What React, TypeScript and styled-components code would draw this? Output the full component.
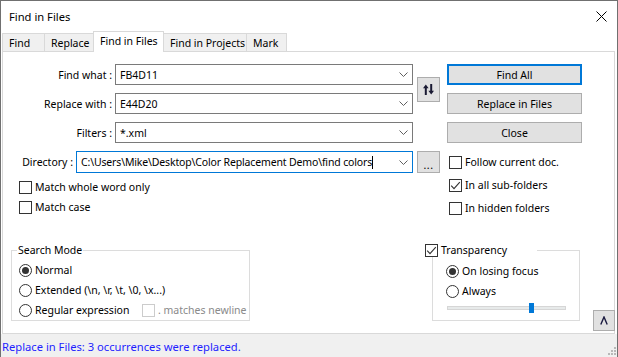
import React from "react";
import styled, { createGlobalStyle } from "styled-components";

const GlobalStyle = createGlobalStyle`
  html, body { margin: 0; padding: 0; background: #ffffff; }
  *, *::before, *::after { box-sizing: border-box; }
`;

const UI_FONT = `"Noto Sans", "Segoe UI", sans-serif`;

const Window = styled.div`
  width: 618px;
  height: 357px;
  display: flex;
  flex-direction: column;
  background: #ffffff;
  border: 1px solid #707070;
  border-bottom: 0;
  font-family: ${UI_FONT};
  font-size: 10.5px;
  color: #000;
  overflow: hidden;
`;

const TitleBar = styled.div`
  height: 30px;
  flex: none;
  display: flex;
  align-items: center;
  padding: 0 10px 0 8px;
`;

const Title = styled.div`
  flex: 1;
  font-size: 11.2px;
`;

const Body = styled.div`
  flex: 1;
  min-height: 0;
  display: flex;
  flex-direction: column;
  padding: 0 2px 0 1px;
`;

const TabStrip = styled.div`
  height: 20px;
  flex: none;
  display: flex;
  align-items: flex-end;
  position: relative;
  z-index: 1;
`;

const Tab = styled.div<{ $w: number; $active?: boolean }>`
  width: ${(p) => p.$w}px;
  height: ${(p) => (p.$active ? 21 : 18)}px;
  margin-bottom: ${(p) => (p.$active ? -1 : 0)}px;
  margin-left: -1px;
  display: flex;
  align-items: center;
  padding: 0 0 ${(p) => (p.$active ? 2 : 0)}px 6px;
  background: ${(p) => (p.$active ? "#ffffff" : "#f0f0f0")};
  border: 1px solid #d9d9d9;
  border-bottom: 0;
  white-space: nowrap;
  position: relative;
  z-index: ${(p) => (p.$active ? 2 : 1)};
  &:first-child { margin-left: 0; }
`;

const Panel = styled.div`
  flex: 1;
  min-height: 0;
  display: flex;
  flex-direction: column;
  border: 1px solid #d9d9d9;
  background: #ffffff;
`;

const TopGrid = styled.div`
  display: grid;
  grid-template-columns: 410px 27px 142px;
  grid-template-rows: 21px 21px 21px 22px auto;
  row-gap: 8px;
  padding-top: 12px;
`;

const FieldRow = styled.div<{ $row: number }>`
  grid-column: 1;
  grid-row: ${(p) => p.$row};
  display: flex;
  align-items: center;
  gap: 3px;
`;

const FieldLabel = styled.div<{ $w: number }>`
  width: ${(p) => p.$w}px;
  flex: none;
  text-align: right;
  white-space: nowrap;
`;

const Combo = styled.div<{ $focused?: boolean }>`
  flex: 1;
  height: 100%;
  display: flex;
  align-items: center;
  padding: 0 4px 0 4px;
  border: 1px solid ${(p) => (p.$focused ? "#0078d7" : "#7a7a7a")};
  background: #ffffff;
`;

const ComboText = styled.div<{ $tight?: boolean }>`
  flex: 1;
  display: flex;
  align-items: center;
  white-space: nowrap;
  overflow: hidden;
  letter-spacing: ${(p) => (p.$tight ? "-0.15px" : "0")};
`;

const Caret = styled.span`
  display: inline-block;
  width: 1px;
  height: 13px;
  background: #000;
`;

const Chevron = () => (
  <svg width="9" height="5" viewBox="0 0 9 5" style={{ flex: "none" }}>
    <polyline points="0.5,0.5 4.5,4.5 8.5,0.5" fill="none" stroke="#606060" strokeWidth="1" />
  </svg>
);

const SideButton = styled.div<{ $row: string }>`
  grid-column: 2;
  grid-row: ${(p) => p.$row};
  align-self: center;
  margin-left: 4px;
  width: 23px;
  height: ${(p) => (p.$row.includes("span") ? 25 : 22)}px;
  display: flex;
  align-items: center;
  justify-content: center;
  background: #e1e1e1;
  border: 1px solid #adadad;
`;

const Dots = styled.span`
  line-height: 1;
  padding-top: 6px;
  letter-spacing: 0.5px;
`;

const ActionButton = styled.div<{ $row: number; $default?: boolean }>`
  grid-column: 3;
  grid-row: ${(p) => p.$row};
  margin-left: 7px;
  width: 135px;
  height: 21px;
  display: flex;
  align-items: center;
  justify-content: center;
  background: #e1e1e1;
  border: ${(p) => (p.$default ? "2px solid #0078d7" : "1px solid #adadad")};
`;

const CheckList = styled.div<{ $col: number; $row: string; $gap: number; $top: number; $left: number }>`
  grid-column: ${(p) => p.$col};
  grid-row: ${(p) => p.$row};
  display: flex;
  flex-direction: column;
  gap: ${(p) => p.$gap}px;
  padding: ${(p) => p.$top}px 0 0 ${(p) => p.$left}px;
`;

const OptionRow = styled.div<{ $h?: number; $w?: number }>`
  height: ${(p) => p.$h ?? 13}px;
  ${(p) => (p.$w ? `width: ${p.$w}px;` : "")}
  flex: none;
  display: flex;
  align-items: center;
  gap: 3px;
  white-space: nowrap;
`;

const OptionText = styled.span<{ $disabled?: boolean }>`
  color: ${(p) => (p.$disabled ? "#8a8a8a" : "#000")};
  line-height: 13px;
`;

const CheckBoxBox = styled.span<{ $disabled?: boolean }>`
  width: 13px;
  height: 13px;
  flex: none;
  display: flex;
  align-items: center;
  justify-content: center;
  border: 1px solid ${(p) => (p.$disabled ? "#cccccc" : "#333333")};
  background: #ffffff;
`;

const RadioCircle = styled.span`
  width: 13px;
  height: 13px;
  flex: none;
  display: flex;
  align-items: center;
  justify-content: center;
  border: 1px solid #333333;
  border-radius: 50%;
  background: #ffffff;
`;

const RadioDot = styled.span`
  width: 7px;
  height: 7px;
  border-radius: 50%;
  background: #333333;
`;

const CheckBox = ({ checked, disabled }: { checked?: boolean; disabled?: boolean }) => (
  <CheckBoxBox $disabled={disabled}>
    {checked && (
      <svg width="11" height="11" viewBox="0 0 11 11">
        <polyline points="1.2,5.6 4,8.6 9.8,2.2" fill="none" stroke="#333" strokeWidth="1.1" />
      </svg>
    )}
  </CheckBoxBox>
);

const Radio = ({ checked }: { checked?: boolean }) => (
  <RadioCircle>{checked && <RadioDot />}</RadioCircle>
);

const BottomRow = styled.div`
  margin-top: auto;
  display: flex;
  align-items: flex-end;
  padding-left: 8px;
  margin-right: -1px;
`;

const GroupBox = styled.div<{ $w: number; $ml: number; $pt: number; $pl: number }>`
  position: relative;
  width: ${(p) => p.$w}px;
  height: 71px;
  margin-left: ${(p) => p.$ml}px;
  margin-bottom: 12px;
  border: 1px solid #dcdcdc;
  padding: ${(p) => p.$pt}px 0 0 ${(p) => p.$pl}px;
  display: flex;
  flex-direction: column;
`;

const GroupTitle = styled.div<{ $left: number; $w?: number }>`
  position: absolute;
  top: -8px;
  left: ${(p) => p.$left}px;
  ${(p) => (p.$w ? `width: ${p.$w}px;` : "")}
  height: 14px;
  padding: 0 1px;
  display: flex;
  align-items: center;
  gap: 3px;
  background: #ffffff;
  line-height: 14px;
  white-space: nowrap;
`;

const RadioRow = styled.div`
  height: 20px;
  flex: none;
  display: flex;
  align-items: center;
`;

const SliderRow = styled.div`
  height: 13px;
  width: 119px;
  margin-left: 1px;
  position: relative;
  display: flex;
  align-items: center;
`;

const SliderTrack = styled.div`
  width: 100%;
  height: 4px;
  background: #e7eaea;
  border: 1px solid #d6d6d6;
`;

const SliderThumb = styled.div`
  position: absolute;
  top: 2px;
  width: 5px;
  height: 10px;
  background: #0078d7;
`;

const CollapseButton = styled.div`
  width: 22px;
  height: 21px;
  margin-left: 13px;
  margin-bottom: 2px;
  display: flex;
  align-items: center;
  justify-content: center;
  background: #e1e1e1;
  border: 1px solid #adadad;
`;

const StatusBar = styled.div`
  height: 23px;
  flex: none;
  display: flex;
  align-items: center;
  padding: 0 1px;
  background: #f0f0f0;
`;

const StatusText = styled.div`
  flex: 1;
  color: #1e1eff;
  font-size: 11.2px;
  padding-top: 1px;
`;

const Grip = styled.svg`
  align-self: flex-end;
  margin-bottom: 2px;
`;

const tabs = [
  { label: "Find", w: 43 },
  { label: "Replace", w: 50 },
  { label: "Find in Files", w: 71, active: true },
  { label: "Find in Projects", w: 84 },
  { label: "Mark", w: 41 },
];

const SLIDER_VALUE = 0.69;

export default function App() {
  return (
    <>
      <GlobalStyle />
      <Window>
        <TitleBar>
          <Title>Find in Files</Title>
          <svg width="11" height="11" viewBox="0 0 11 11">
            <path d="M0.5 0.5 L10.5 10.5 M10.5 0.5 L0.5 10.5" stroke="#000" strokeWidth="1" />
          </svg>
        </TitleBar>
        <Body>
          <TabStrip>
            {tabs.map((t) => (
              <Tab key={t.label} $w={t.w} $active={t.active}>
                {t.label}
              </Tab>
            ))}
          </TabStrip>
          <Panel>
            <TopGrid>
              <FieldRow $row={1}>
                <FieldLabel $w={109}>Find what :</FieldLabel>
                <Combo>
                  <ComboText>FB4D11</ComboText>
                  <Chevron />
                </Combo>
              </FieldRow>
              <FieldRow $row={2}>
                <FieldLabel $w={109}>Replace with :</FieldLabel>
                <Combo>
                  <ComboText>E44D20</ComboText>
                  <Chevron />
                </Combo>
              </FieldRow>
              <FieldRow $row={3}>
                <FieldLabel $w={109}>Filters :</FieldLabel>
                <Combo>
                  <ComboText>*.xml</ComboText>
                  <Chevron />
                </Combo>
              </FieldRow>
              <FieldRow $row={4}>
                <FieldLabel $w={70}>Directory :</FieldLabel>
                <Combo $focused>
                  <ComboText $tight>
                    C:\Users\Mike\Desktop\Color Replacement Demo\find colors
                    <Caret />
                  </ComboText>
                  <Chevron />
                </Combo>
              </FieldRow>

              <SideButton $row="1 / span 2">
                <svg width="11" height="11" viewBox="0 0 11 11">
                  <path d="M2.8 11 V2.5" stroke="#1a1a33" strokeWidth="2" />
                  <path d="M0 4.2 L2.8 0.4 L5.6 4.2 Z" fill="#1a1a33" />
                  <path d="M8.2 0 V8.5" stroke="#1a1a33" strokeWidth="2" />
                  <path d="M5.4 6.8 L8.2 10.6 L11 6.8 Z" fill="#1a1a33" />
                </svg>
              </SideButton>
              <SideButton $row="4">
                <Dots>...</Dots>
              </SideButton>

              <ActionButton $row={1} $default>
                Find All
              </ActionButton>
              <ActionButton $row={2}>Replace in Files</ActionButton>
              <ActionButton $row={3}>Close</ActionButton>

              <CheckList $col={3} $row="4 / span 2" $gap={10} $top={5} $left={9}>
                <OptionRow>
                  <CheckBox />
                  <OptionText>Follow current doc.</OptionText>
                </OptionRow>
                <OptionRow>
                  <CheckBox checked />
                  <OptionText>In all sub-folders</OptionText>
                </OptionRow>
                <OptionRow>
                  <CheckBox />
                  <OptionText>In hidden folders</OptionText>
                </OptionRow>
              </CheckList>

              <CheckList $col={1} $row="5" $gap={7} $top={0} $left={16}>
                <OptionRow>
                  <CheckBox />
                  <OptionText>Match whole word only</OptionText>
                </OptionRow>
                <OptionRow>
                  <CheckBox />
                  <OptionText>Match case</OptionText>
                </OptionRow>
              </CheckList>
            </TopGrid>

            <BottomRow>
              <GroupBox $w={239} $ml={0} $pt={9} $pl={7}>
                <GroupTitle $left={5}>Search Mode</GroupTitle>
                <RadioRow>
                  <OptionRow $h={20}>
                    <Radio checked />
                    <OptionText>Normal</OptionText>
                  </OptionRow>
                </RadioRow>
                <RadioRow>
                  <OptionRow $h={20}>
                    <Radio />
                    <OptionText>Extended (\n, \r, \t, \0, \x...)</OptionText>
                  </OptionRow>
                </RadioRow>
                <RadioRow>
                  <OptionRow $h={20} $w={123}>
                    <Radio />
                    <OptionText>Regular expression</OptionText>
                  </OptionRow>
                  <OptionRow $h={20}>
                    <CheckBox disabled />
                    <OptionText $disabled>. matches newline</OptionText>
                  </OptionRow>
                </RadioRow>
              </GroupBox>

              <GroupBox $w={148} $ml={182} $pt={10} $pl={13}>
                <GroupTitle $left={-9} $w={113}>
                  <CheckBox checked />
                  <OptionText>Transparency</OptionText>
                </GroupTitle>
                <RadioRow>
                  <OptionRow $h={20}>
                    <Radio checked />
                    <OptionText>On losing focus</OptionText>
                  </OptionRow>
                </RadioRow>
                <RadioRow>
                  <OptionRow $h={20}>
                    <Radio />
                    <OptionText>Always</OptionText>
                  </OptionRow>
                </RadioRow>
                <SliderRow>
                  <SliderTrack />
                  <SliderThumb style={{ left: `${SLIDER_VALUE * 119}px` }} />
                </SliderRow>
              </GroupBox>

              <CollapseButton>
                <svg width="8" height="9" viewBox="0 0 8 9">
                  <polyline points="0.8,8.5 4,1 7.2,8.5" fill="none" stroke="#1a1a40" strokeWidth="1.4" />
                </svg>
              </CollapseButton>
            </BottomRow>
          </Panel>
        </Body>
        <StatusBar>
          <StatusText>Replace in Files: 3 occurrences were replaced.</StatusText>
          <Grip width="8" height="8" viewBox="0 0 8 8">
            <rect x="6" y="0" width="2" height="2" fill="#b8b8b8" />
            <rect x="3" y="3" width="2" height="2" fill="#b8b8b8" />
            <rect x="6" y="3" width="2" height="2" fill="#b8b8b8" />
            <rect x="0" y="6" width="2" height="2" fill="#b8b8b8" />
            <rect x="3" y="6" width="2" height="2" fill="#b8b8b8" />
            <rect x="6" y="6" width="2" height="2" fill="#b8b8b8" />
          </Grip>
        </StatusBar>
      </Window>
    </>
  );
}
